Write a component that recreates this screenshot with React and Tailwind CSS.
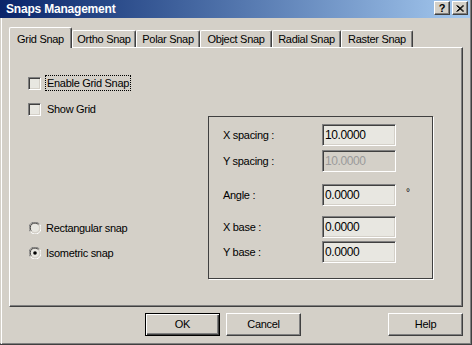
import React from 'react';

const sunken =
  'border border-t-[#808080] border-l-[#808080] border-b-white border-r-white shadow-[inset_1px_1px_0_#404040,inset_-1px_-1px_0_#d4d0c8]';
const raised =
  'border border-t-white border-l-white border-r-[#404040] border-b-[#404040] shadow-[inset_-1px_-1px_0_#808080]';

const Checkbox = ({ label, focused }) => (
  <div className="flex items-center h-[16px]">
    <div className={`w-[13px] h-[13px] bg-[#e8e7e1] ${sunken}`} />
    <span
      className={`ml-[4px] px-px leading-[14px] ${focused ? 'border border-dotted border-black' : 'border border-transparent'}`}
    >
      {label}
    </span>
  </div>
);

const Radio = ({ label, checked }) => (
  <div className="flex items-center h-[16px]">
    <svg width="12" height="12" viewBox="0 0 12 12" className="ml-px">
      <path d="M10.5 2.2 A5.5 5.5 0 0 0 1.2 9.5" stroke="#808080" strokeWidth="1" fill="none" />
      <path d="M9.4 2.6 A4.3 4.3 0 0 0 2.4 8.8" stroke="#404040" strokeWidth="1" fill="none" />
      <circle cx="6" cy="6" r="4" fill="#e8e7e1" />
      <path d="M1.5 9.8 A5.5 5.5 0 0 0 10.8 2.5" stroke="#ffffff" strokeWidth="1" fill="none" />
      {checked && <circle cx="6" cy="6" r="1.8" fill="#000" />}
    </svg>
    <span className="ml-[5px] leading-[14px]">{label}</span>
  </div>
);

const Field = ({ label, value, disabled, unit, mt }) => (
  <div className={`flex items-center h-[22px] ${mt}`}>
    <span className="w-[99px]">{label}</span>
    <div
      className={`w-[74px] h-[22px] flex items-center pl-[2px] ${sunken} ${
        disabled ? 'bg-[#d4d0c8] text-[#9a9a9a]' : 'bg-[#e8e7e1]'
      } text-[12px] tracking-[-0.4px]`}
    >
      {value}
    </div>
    {unit && <span className="ml-[10px] -mt-[6px] text-[10px]">{unit}</span>}
  </div>
);

const Tab = ({ label, width, selected }) =>
  selected ? (
    <div
      className={`${width} h-[21px] -mb-px relative z-10 bg-[#d4d0c8] border-l border-t border-white border-r border-r-[#404040] shadow-[inset_-1px_0_0_#808080] rounded-t-[2px] flex justify-center pt-[3px]`}
    >
      {label}
    </div>
  ) : (
    <div
      className={`${width} h-[17px] bg-[#d4d0c8] border-l border-t border-white border-r border-r-[#404040] shadow-[inset_-1px_0_0_#808080] rounded-t-[2px] flex items-center justify-center`}
    >
      {label}
    </div>
  );

const Button = ({ label, isDefault, className = '' }) => (
  <div
    className={`w-[75px] h-[23px] flex items-center justify-center ${
      isDefault
        ? 'border border-black shadow-[inset_1px_1px_0_#fff,inset_-1px_-1px_0_#404040,inset_-2px_-2px_0_#808080]'
        : raised
    } ${className}`}
  >
    {label}
  </div>
);

export default function App() {
  return (
    <div className="w-[472px] h-[345px] bg-[#d4d0c8] font-['Liberation_Sans',Arial,sans-serif] text-[11px] tracking-[-0.3px] text-black flex flex-col border-r border-b border-[#404040] shadow-[inset_-1px_-1px_0_#808080] overflow-hidden">
      {/* Title bar */}
      <div className="h-[18px] mr-px flex items-center bg-gradient-to-r from-[#0a246a] to-[#a6caf0]">
        <span className="ml-[6px] text-white font-bold text-[12px] tracking-[-0.2px]">
          Snaps Management
        </span>
        <div className="ml-auto flex items-center gap-[2px] mr-[2px] -mt-[2px]">
          <div className={`w-[16px] h-[14px] bg-[#d4d0c8] ${raised} flex items-center justify-center font-bold text-[11px] leading-none`}>
            ?
          </div>
          <div className={`w-[16px] h-[14px] bg-[#d4d0c8] ${raised} flex items-center justify-center`}>
            <svg width="8" height="7" viewBox="0 0 8 7">
              <path d="M0.5 0.5 L7 6.5 M1.5 0.5 L8 6.5 M7 0.5 L0.5 6.5 M8 0.5 L1.5 6.5" stroke="#000" strokeWidth="1" />
            </svg>
          </div>
        </div>
      </div>

      {/* Body */}
      <div className="flex-1 ml-px border-l border-white flex flex-col">
        {/* Tabs */}
        <div className="mt-[9px] ml-[7px] flex items-end">
          <Tab label="Grid Snap" width="w-[63px]" selected />
          <Tab label="Ortho Snap" width="w-[64px]" />
          <Tab label="Polar Snap" width="w-[64px]" />
          <Tab label="Object Snap" width="w-[72px]" />
          <Tab label="Radial Snap" width="w-[69px]" />
          <Tab label="Raster Snap" width="w-[72px]" />
        </div>

        {/* Panel */}
        <div className="ml-[7px] w-[454px] h-[260px] border-l border-t border-white border-r border-b border-r-[#404040] border-b-[#404040] shadow-[inset_-1px_-1px_0_#808080] flex">
          <div className="w-[198px] pl-[18px] flex flex-col">
            <div className="mt-[27px]">
              <Checkbox label="Enable Grid Snap" focused />
            </div>
            <div className="mt-[10px]">
              <Checkbox label="Show Grid" />
            </div>
            <div className="mt-[103px]">
              <Radio label="Rectangular snap" />
            </div>
            <div className="mt-[9px]">
              <Radio label="Isometric snap" checked />
            </div>
          </div>

          <div className="mt-[68px] w-[225px] h-[163px] border border-[#404040] shadow-[1px_1px_0_#fff] pl-[14px] flex flex-col">
            <Field label="X spacing :" value="10.0000" mt="mt-[7px]" />
            <Field label="Y spacing :" value="10.0000" disabled mt="mt-[4px]" />
            <Field label="Angle :" value="0.0000" unit="°" mt="mt-[12px]" />
            <Field label="X base :" value="0.0000" mt="mt-[10px]" />
            <Field label="Y base :" value="0.0000" mt="mt-[3px]" />
          </div>
        </div>

        {/* Buttons */}
        <div className="mt-[6px] flex">
          <Button label="OK" isDefault className="ml-[143px]" />
          <Button label="Cancel" className="ml-[6px]" />
          <Button label="Help" className="ml-[87px]" />
        </div>
      </div>
    </div>
  );
}
